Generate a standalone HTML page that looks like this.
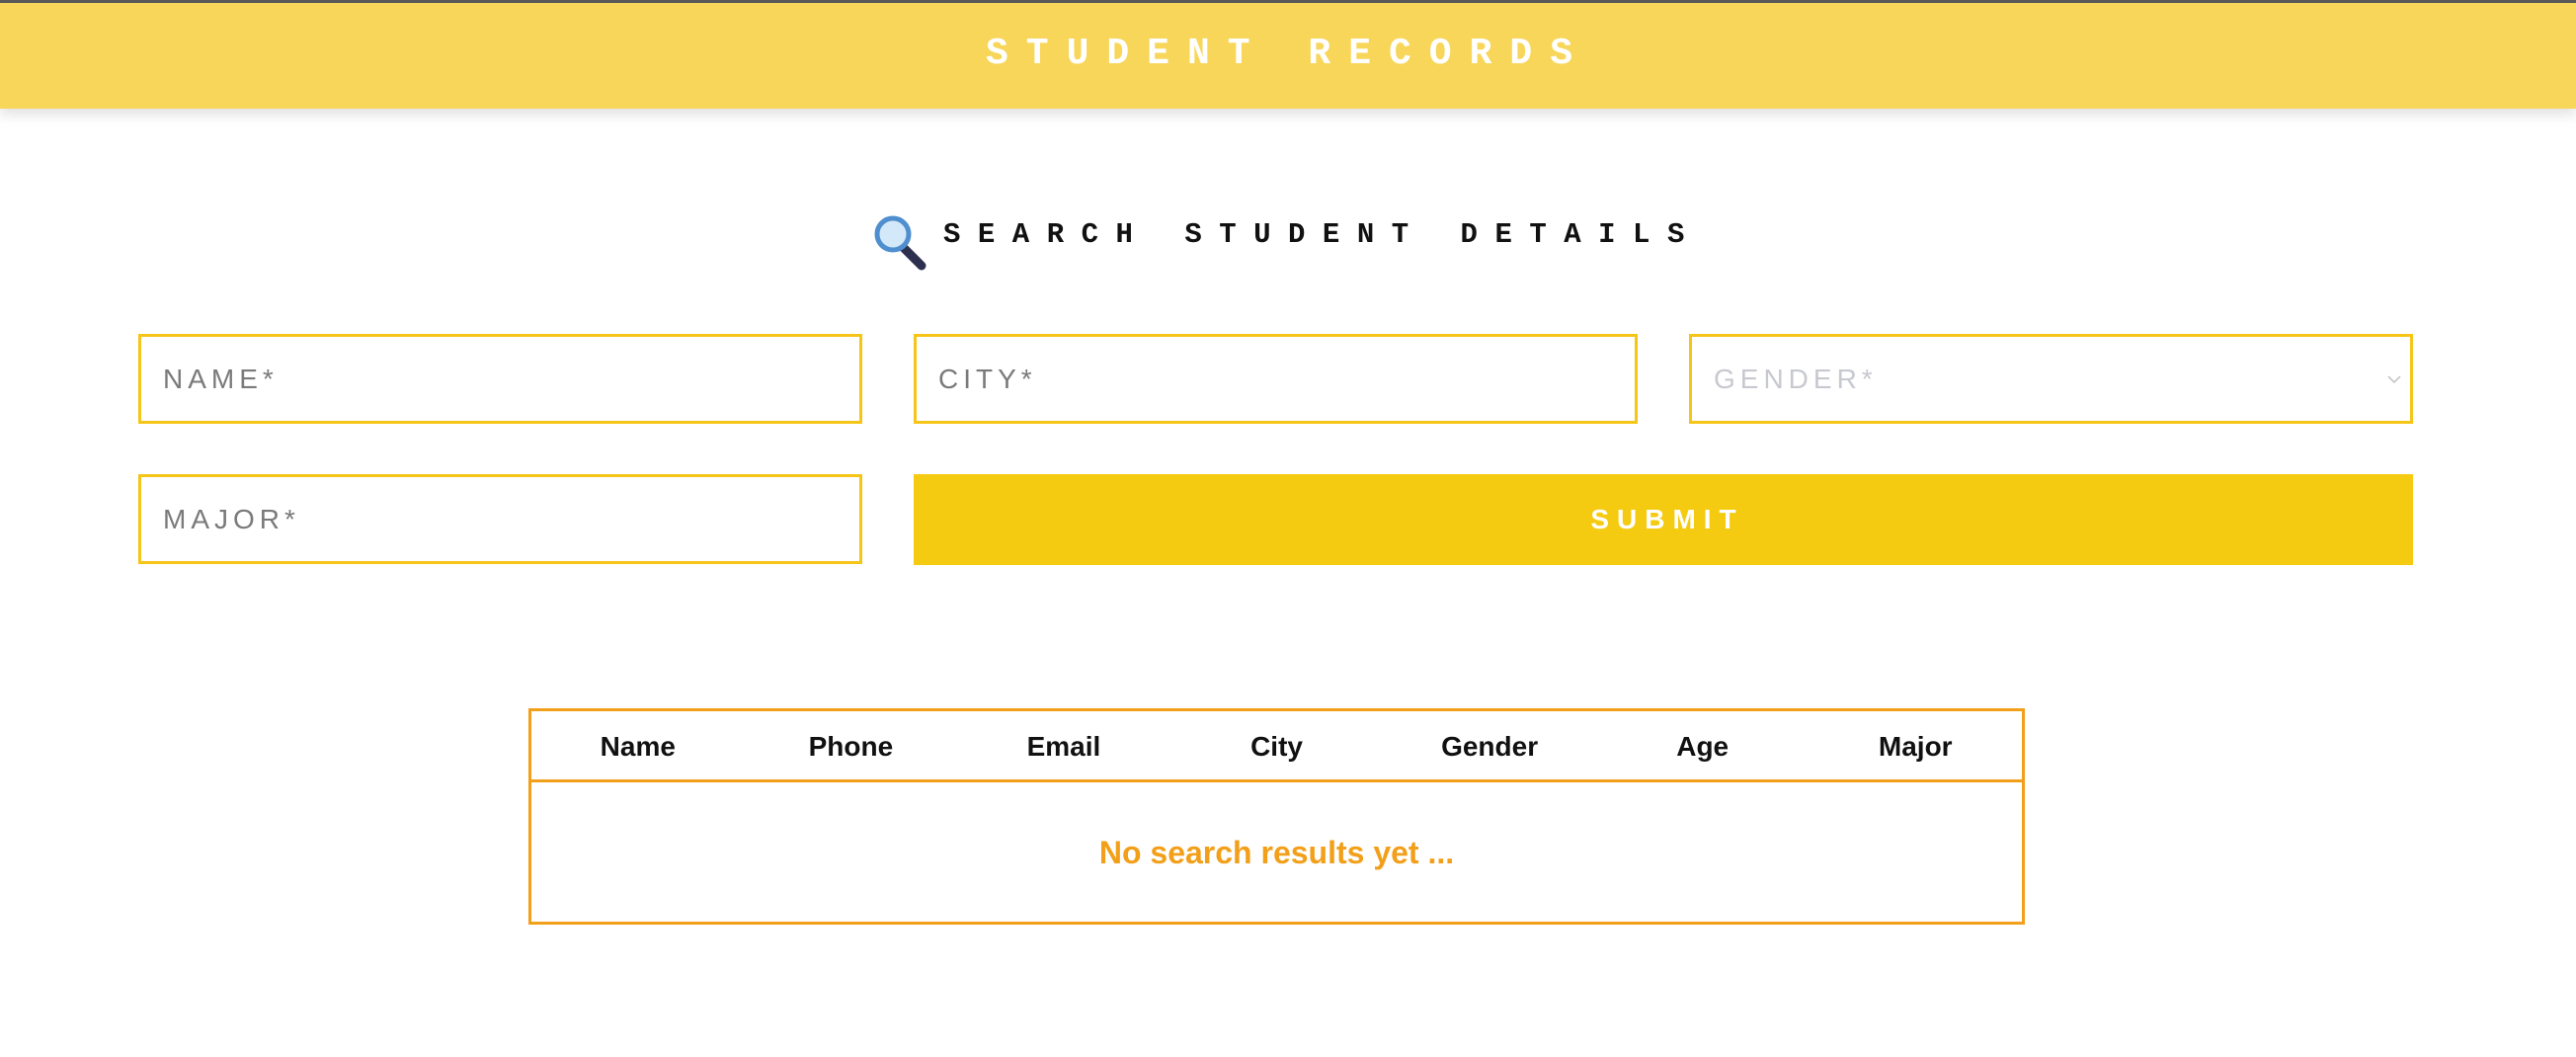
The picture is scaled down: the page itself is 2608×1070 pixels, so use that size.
<!DOCTYPE html>
<html><head><meta charset="utf-8"><style>
*{margin:0;padding:0;box-sizing:border-box}
body{width:2608px;height:1070px;background:#fff;position:relative;overflow:hidden;font-family:"Liberation Sans",sans-serif}
.topline{position:absolute;left:0;top:0;width:2608px;height:3px;background:#5a5a5a}
.hdr{position:absolute;left:0;top:3px;width:2608px;height:107px;background:#f7d65a;box-shadow:0 6px 12px rgba(0,0,0,0.12)}
.hdr span{position:absolute;left:0;width:2608px;top:30px;text-align:center;font-family:"Liberation Mono",monospace;font-weight:bold;color:#fff;font-size:38px;letter-spacing:18px;padding-left:0;line-height:44px}
.sh{position:absolute;left:955px;top:218px;font-family:"Liberation Mono",monospace;font-weight:bold;font-size:29px;letter-spacing:17.5px;color:#111;line-height:40px;white-space:nowrap}
.box{position:absolute;height:91px;border:3px solid #f5c518;background:#fff}
.box span{position:absolute;left:22px;top:27px;font-size:28px;letter-spacing:5px;color:#7a7a7a;line-height:32px}
.btn{position:absolute;left:925px;top:480px;width:1518px;height:92px;background:#f5cb11;color:#fff;font-weight:bold;font-size:28px;letter-spacing:8px;text-align:center;line-height:92px;padding-left:8px}
.tbl{position:absolute;left:535px;top:717px;width:1515px;height:219px;border:3px solid #f29f1a}
.th{position:absolute;left:0;top:0;width:1509px;height:72px;border-bottom:3px solid #f29f1a;display:flex}
.th div{flex:1;text-align:center;font-weight:bold;font-size:28px;line-height:72px;color:#111}
.empty{position:absolute;left:0;top:124px;width:1509px;text-align:center;font-weight:bold;font-size:32px;color:#f29f1a;line-height:38px}
</style></head><body>
<div class="topline"></div>
<div class="hdr"><span>STUDENT RECORDS</span></div>
<svg style="position:absolute;left:883px;top:216px" width="60" height="58" viewBox="0 0 60 58">
<line x1="30" y1="33" x2="50" y2="53" stroke="#2d2f4e" stroke-width="9" stroke-linecap="round"/>
<circle cx="21" cy="21" r="16" fill="#d3e8f8" stroke="#4f8fcf" stroke-width="5"/>
</svg>
<div class="sh">SEARCH STUDENT DETAILS</div>
<div class="box" style="left:140px;top:338px;width:733px"><span>NAME*</span></div>
<div class="box" style="left:925px;top:338px;width:733px"><span>CITY*</span></div>
<div class="box" style="left:1710px;top:338px;width:733px"><span style="color:#c8c9d0">GENDER*</span>
<svg style="position:absolute;right:8px;top:38px" width="16" height="10" viewBox="0 0 16 10"><path d="M2 2 L8 8 L14 2" fill="none" stroke="#c0c0c0" stroke-width="1.5"/></svg></div>
<div class="box" style="left:140px;top:480px;width:733px"><span>MAJOR*</span></div>
<div class="btn">SUBMIT</div>
<div class="tbl">
<div class="th"><div>Name</div><div>Phone</div><div>Email</div><div>City</div><div>Gender</div><div>Age</div><div>Major</div></div>
<div class="empty">No search results yet ...</div>
</div>
</body></html>
